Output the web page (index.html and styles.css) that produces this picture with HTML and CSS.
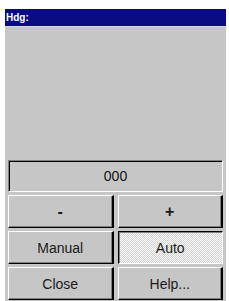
FILE: index.html
```html
<!DOCTYPE html>
<html lang="en">
<head>
  <meta charset="UTF-8">
  <title>Hdg</title>
  <link rel="stylesheet" href="styles.css">
</head>
<body>
  <div class="dialog">
    <header class="caption">Hdg:</header>
    <div class="client">
      <div class="edit">000</div>
      <div class="buttons">
        <button class="btn bold">-</button>
        <button class="btn bold">+</button>
        <button class="btn">Manual</button>
        <button class="btn pressed">Auto</button>
        <button class="btn">Close</button>
        <button class="btn">Help...</button>
      </div>
    </div>
  </div>
</body>
</html>
```
FILE: styles.css
```css
html, body {
  margin: 0;
  height: 100%;
  background: #fff;
}

body {
  padding: 9px 3px 0 5px;
  box-sizing: border-box;
  font-family: "Liberation Sans", Arial, sans-serif;
}

/* dialog window */
.dialog {
  height: 100%;
  display: flex;
  flex-direction: column;
  background: #c6c6c6;
}

.caption {
  height: 17px;
  background: #0a0a82;
  color: #fff;
  font-size: 10px;
  font-weight: bold;
  line-height: 17px;
  padding-left: 1px;
  border-bottom: 1px solid #d6d6e6;
}

.client {
  flex: 1;
  display: flex;
  flex-direction: column;
  justify-content: flex-end;
  padding: 0 3px 1px 3px;
}

/* sunken edit box */
.edit {
  height: 32px;
  box-sizing: border-box;
  border: 1px solid;
  border-color: #808080 #fff #fff #808080;
  box-shadow: inset 1px 1px #000;
  text-align: center;
  font-size: 14px;
  line-height: 30px;
  color: #111;
  margin-bottom: 3px;
}

.buttons {
  display: grid;
  grid-template-columns: 1fr 1fr;
  grid-auto-rows: 33px;
  column-gap: 4px;
  row-gap: 3px;
}

.btn {
  margin: 0;
  padding: 0;
  font-family: inherit;
  font-size: 14px;
  color: #1a1a1a;
  background: #c6c6c6;
  border: 1px solid;
  border-color: #fff #000 #000 #fff;
  border-right-width: 2px;
  box-shadow: inset -1px -1px #808080;
}

.btn.bold {
  font-size: 16px;
  font-weight: bold;
}

.btn.pressed {
  border-color: #000 #fff #fff #000;
  border-right-width: 1px;
  box-shadow: inset 1px 1px #808080;
  background: repeating-conic-gradient(#fff 0 25%, #cfcfcf 0 50%) 0 0 / 2px 2px;
}
```
